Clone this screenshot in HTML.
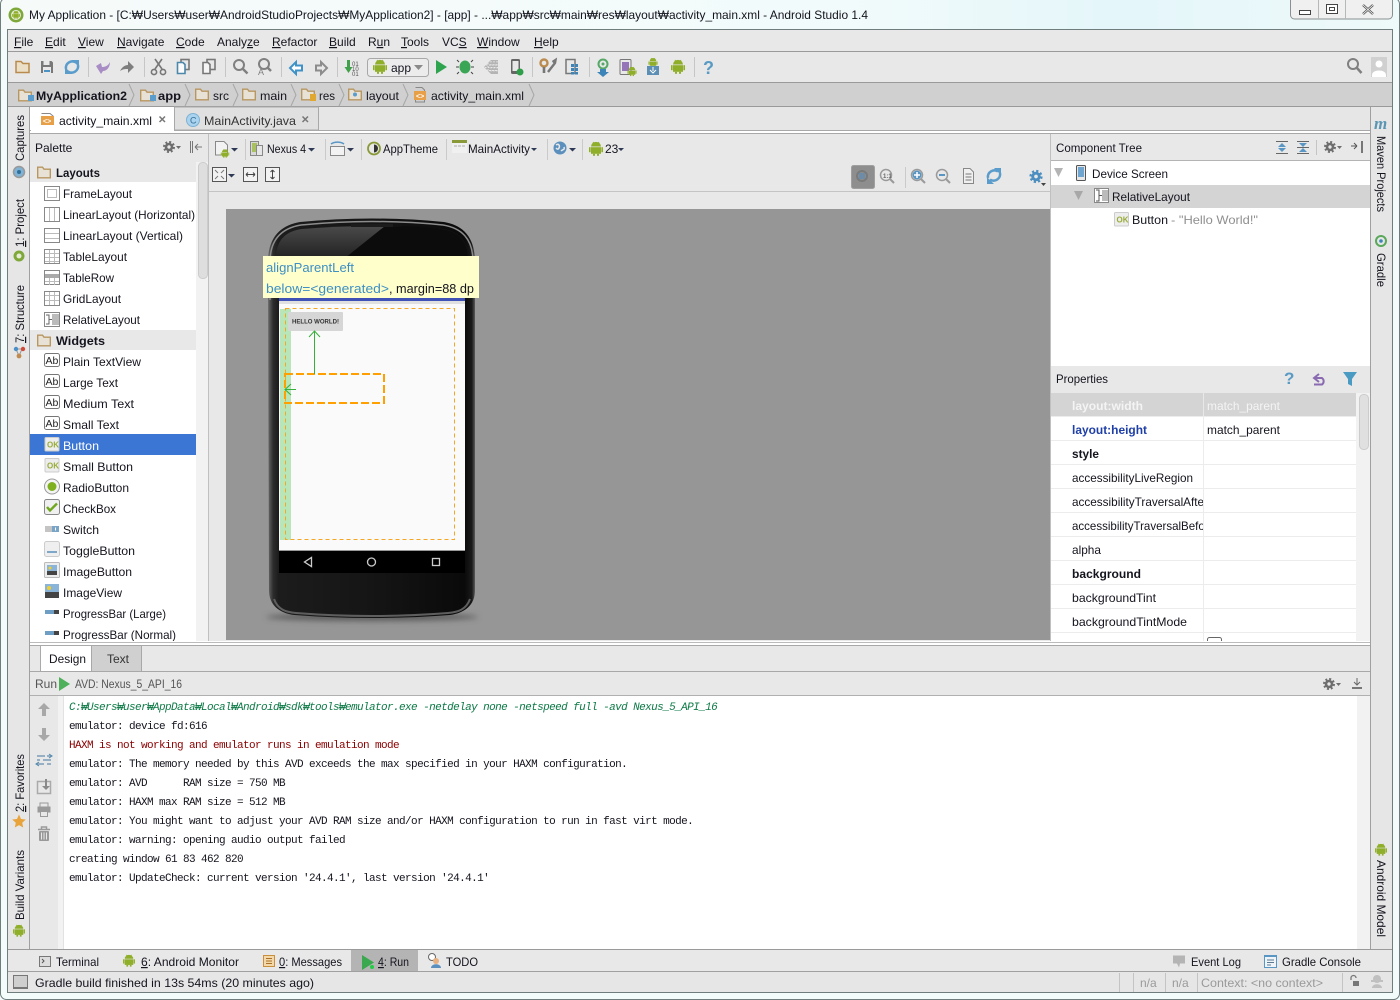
<!DOCTYPE html>
<html><head><meta charset="utf-8"><style>
html,body{margin:0;padding:0;width:1400px;height:1000px;overflow:hidden;background:#f4fbfb}
svg{display:block;position:absolute;left:0;top:0}
text{font-family:"Liberation Sans","Noto Sans CJK KR",sans-serif;font-size:12px;fill:#14141e;white-space:pre}
.b{font-weight:bold}
.g{fill:#8f8f8f}
.m text,text.m{font-family:"Liberation Mono","Noto Sans CJK KR",monospace;font-size:11px;letter-spacing:-.6px}
.u{text-decoration:underline}
</style></head><body>
<svg width="1400" height="1000" viewBox="0 0 1400 1000" xmlns="http://www.w3.org/2000/svg">
<defs>
<linearGradient id="tb" x1="0" y1="0" x2="1" y2="0"><stop offset="0" stop-color="#f6fbfa"/><stop offset=".6" stop-color="#f2fbfb"/><stop offset=".8" stop-color="#e4f6fa"/><stop offset="1" stop-color="#eef9f9"/></linearGradient>
<linearGradient id="ph" x1="0" y1="0" x2="1" y2="0"><stop offset="0" stop-color="#6a6a6a"/><stop offset=".025" stop-color="#2c2c2c"/><stop offset=".05" stop-color="#1c1c1c"/><stop offset=".5" stop-color="#151515"/><stop offset=".95" stop-color="#0a0a0a"/><stop offset=".985" stop-color="#1a1a1a"/><stop offset="1" stop-color="#5a5a5a"/></linearGradient>
<linearGradient id="phtop" x1="0" y1="0" x2="0" y2="1"><stop offset="0" stop-color="#4a4a4a"/><stop offset="1" stop-color="#222"/></linearGradient>
<filter id="bl" x="-20%" y="-200%" width="140%" height="500%"><feGaussianBlur stdDeviation="3"/></filter>
<g id="droid"><path d="M-5-1.5a5 4.6 0 0 1 10 0z" fill="#8fae2a"/><path d="M-3-6l1 1.5M3-6l-1 1.5" stroke="#8fae2a" fill="none"/><rect x="-5" y="-.8" width="10" height="6.6" fill="#8fae2a"/><rect x="-7" y="-.8" width="1.6" height="5" fill="#8fae2a"/><rect x="5.4" y="-.8" width="1.6" height="5" fill="#8fae2a"/><rect x="-3" y="5.8" width="2" height="2" fill="#8fae2a"/><rect x="1" y="5.8" width="2" height="2" fill="#8fae2a"/></g>
<path id="fold" d="M.7 1.2H5.500L7 3.200H13.300V11.800H.7z" fill="#e8e2d6" stroke="#b8965f" stroke-width="1.400"/>
<g id="gear"><circle r="3" fill="none" stroke="#6e6e6e" stroke-width="2.600"/><circle r="5" fill="none" stroke="#6e6e6e" stroke-width="2" stroke-dasharray="2 1.930"/></g>
<g id="ab"><rect x=".5" y=".5" width="15" height="13" rx="2" fill="#fff" stroke="#777"/><text x="1.500" y="11" style="font-size:10.500px;fill:#222">Ab</text></g>
<g id="ok"><rect x=".5" y=".5" width="14" height="13.500" rx="1" fill="#ededed" stroke="#ccc"/><text x="2.500" y="10.500" style="font-size:8px;font-weight:bold;fill:#9aac3a">OK</text></g>
<clipPath id="c1"><rect x="30" y="162" width="166" height="479"/></clipPath>
<clipPath id="c2"><rect x="1052" y="393" width="151" height="248"/></clipPath>
<clipPath id="c3"><rect x="1051" y="393" width="305" height="248"/></clipPath>
</defs>

<!-- window frame -->
<rect width="1400" height="1000" fill="#f4fbfb"/>
<rect width="1400" height="30" fill="url(#tb)"/>
<rect x="7.500" y="29.500" width="1385" height="963" fill="#e6e6e6" stroke="#6f7d7d"/>
<rect x="0.500" y="-2" width="1399" height="1001.500" rx="6" fill="none" stroke="#6f7d7d"/>
<path d="M1290.500 0V15a4 4 0 0 0 4 4h94a4 4 0 0 0 4-4V0" fill="#f0f0f0" stroke="#8a8f8f"/>
<path d="M1318.500 0V19M1345.500 0V19" stroke="#b5b8b8"/>
<rect x="1299.500" y="10.500" width="11" height="4" fill="#fff" stroke="#444"/>
<rect x="1326.500" y="4.500" width="11" height="9" fill="#fff" stroke="#444"/><rect x="1329.500" y="7.500" width="5" height="3" fill="#fff" stroke="#444"/>
<path d="M1363 5l10 9M1373 5l-10 9" stroke="#555" stroke-width="2.400"/><path d="M1363 5l10 9M1373 5l-10 9" stroke="#fff" stroke-width=".8"/>
<circle cx="16" cy="15" r="7.500" fill="#7fa83a"/><circle cx="16" cy="15" r="5" fill="#e6ecd8"/><use href="#droid" transform="translate(16,14.500) scale(.55)"/>
<text x="29" y="19" textLength="839" lengthAdjust="spacingAndGlyphs">My Application - [C:₩Users₩user₩AndroidStudioProjects₩MyApplication2] - [app] - ...₩app₩src₩main₩res₩layout₩activity_main.xml - Android Studio 1.4</text>

<!-- menu -->
<rect x="8" y="30" width="1384" height="21" fill="#e8e8e8"/>
<rect x="8" y="51" width="1384" height="1" fill="#9a9a9a"/>
<text y="46"><tspan x="14" class="u">F</tspan><tspan>ile</tspan><tspan x="45" class="u">E</tspan><tspan>dit</tspan><tspan x="78" class="u">V</tspan><tspan>iew</tspan><tspan x="117" class="u">N</tspan><tspan>avigate</tspan><tspan x="176" class="u">C</tspan><tspan>ode</tspan><tspan x="217">Analy</tspan><tspan class="u">z</tspan><tspan>e</tspan><tspan x="272" class="u">R</tspan><tspan>efactor</tspan><tspan x="329" class="u">B</tspan><tspan>uild</tspan><tspan x="368">R</tspan><tspan class="u">u</tspan><tspan>n</tspan><tspan x="401" class="u">T</tspan><tspan>ools</tspan><tspan x="442">VC</tspan><tspan class="u">S</tspan><tspan x="477" class="u">W</tspan><tspan>indow</tspan><tspan x="534" class="u">H</tspan><tspan>elp</tspan></text>

<!-- toolbar -->
<rect x="8" y="52" width="1384" height="30" fill="#e8e8e8"/>
<rect x="8" y="82" width="1384" height="1" fill="#9a9a9a"/>
<g stroke="#c6c6c6"><path d="M88.500 57V77M144.500 57V77M225.500 57V77M281.500 57V77M337.500 57V77M532.500 57V77M589.500 57V77M694.500 57V77"/></g>
<path d="M16 61.500H21L23 63.500H29V72.500H16z" fill="#ecdfc8" stroke="#b88a4c" stroke-width="1.500"/>
<path d="M41 61H51.500L53 62.500V73H41z" fill="#787878"/><rect x="43.500" y="61" width="6" height="4" fill="#e8e8e8"/><rect x="43" y="67" width="8" height="6" fill="#e8e8e8"/><rect x="44" y="70" width="6" height="2" fill="#4c93c4"/>
<path d="M66 69a6.500 6.500 0 0 1 10-6.500M78 65a6.500 6.500 0 0 1-10 6.500" fill="none" stroke="#5a9ccb" stroke-width="2.500"/><path d="M72 60h7v7zM72 74h-7v-7z" fill="#5a9ccb"/>
<path d="M96 66l5 8 2-3c4 0 7-4 7-9-2 4-5 5-8 5l-1-4z" fill="#a88cc4"/>
<path d="M120 71c2-4 5-6 8-6v-4l6 6-6 6v-4c-3 0-5 0-8 2z" fill="#7e7e7e"/>
<g fill="none" stroke="#777" stroke-width="1.600"><path d="M155 59l7 10M162 59l-7 10"/><circle cx="154" cy="72" r="2.600"/><circle cx="163" cy="72" r="2.600"/></g>
<g fill="#e8e8e8" stroke-width="1.600"><rect x="181" y="59.500" width="8" height="10" stroke="#777"/><path d="M177.500 62.500H183L185 64.500V73.500H177.500z" fill="#fafafa" stroke="#4c87ac"/></g>
<g fill="#e8e8e8" stroke-width="1.600"><rect x="207" y="59.500" width="8" height="10" stroke="#777"/><path d="M203 62.500H208L210 64.500V73.500H203z" fill="#f5f5f5" stroke="#777"/></g>
<g fill="none" stroke="#808080"><circle cx="239" cy="65" r="5" stroke-width="2"/><path d="M243 69l4.500 4.500" stroke-width="2.500"/><circle cx="264" cy="64" r="5" stroke-width="2"/><path d="M268 68l3 3" stroke-width="2.500"/></g>
<text x="258" y="75" style="font-size:9px;fill:#808080">A</text>
<path d="M290 68l6-6v3.500h6v5h-6v3.500z" fill="#fff" stroke="#3f92c8" stroke-width="2"/>
<path d="M327 68l-6-6v3.500h-5v5h5v3.500z" fill="#e8e8e8" stroke="#8c8c8c" stroke-width="2"/>
<path d="M347 60h3v7h2.500l-4 6-4-6H347z" fill="#41a04a"/>
<text x="352" y="66" style="font-size:6px;fill:#555">01</text><text x="352" y="71" style="font-size:6px;fill:#555">10</text><text x="352" y="76" style="font-size:6px;fill:#555">01</text>
<rect x="367.500" y="58.500" width="61" height="18" rx="3" fill="#ececec" stroke="#a8a8a8"/>
<use href="#droid" transform="translate(380,66)"/>
<text x="391" y="72">app</text>
<path d="M414 65h9l-4.500 5z" fill="#8a8a8a"/>
<path d="M436 60l11 7-11 7z" fill="#2fa44f"/>
<ellipse cx="465" cy="67" rx="5.500" ry="6.500" fill="#3aa655"/><path d="M459 62l-2-2M459 67h-3M459 72l-2 2M471 62l2-2M471 67h3M471 72l2 2" stroke="#444"/>
<path d="M484 67l7-7h7v14h-7z" fill="#b4b4b4"/><path d="M488 63v8M491 61v12M494 61v12M497 61v12M486 65h12M485 67.500h13M486 70.500h12" stroke="#e8e8e8" stroke-dasharray="1.500 1.500"/>
<rect x="511" y="59" width="9" height="15" rx="1.500" fill="#666"/><rect x="512.500" y="61" width="6" height="10" fill="#e8e8e8"/>
<circle cx="520" cy="72" r="3.500" fill="#2f9e4a"/>
<circle cx="544" cy="63" r="3.500" fill="none" stroke="#bb8a4e" stroke-width="2.400"/><path d="M548 72l7-9 .5-3-3 2" fill="none" stroke="#777" stroke-width="2.400"/><path d="M544 67v6" stroke="#777" stroke-width="2.600"/>
<rect x="566" y="59.500" width="9" height="14" fill="#e8e8e8" stroke="#777" stroke-width="1.500"/><g fill="#3d85b8"><rect x="571" y="64" width="3" height="3"/><rect x="575" y="64" width="3" height="3"/><rect x="571" y="68" width="3" height="3"/><rect x="575" y="68" width="3" height="3"/><rect x="571" y="72" width="3" height="2.500"/><rect x="575" y="72" width="3" height="2.500"/></g>
<circle cx="603" cy="64" r="4.500" fill="none" stroke="#55a868" stroke-width="2"/><circle cx="603" cy="64" r="1.500" fill="#55a868"/><path d="M600 69h6v3h3l-6 5-6-5h3z" fill="#3d85b8"/>
<rect x="620" y="59.500" width="11" height="15" rx="1" fill="#e8e8e8" stroke="#777"/><rect x="622" y="62" width="7" height="9" fill="#9575b8"/><use href="#droid" transform="translate(632,71) scale(.65)"/>
<use href="#droid" transform="translate(653,62) scale(.65)"/><rect x="647" y="66" width="12" height="9" fill="#5d8fb4"/><path d="M653 67v4M650 70l3 3 3-3" stroke="#fff" fill="none"/>
<use href="#droid" transform="translate(678,66)"/>
<text x="703" y="74" style="font-size:18px;font-weight:bold;fill:#5a9bc4">?</text>
<g fill="none" stroke="#808080"><circle cx="1353" cy="64" r="5" stroke-width="2"/><path d="M1357 68l4.500 5" stroke-width="2.500"/></g>
<rect x="1371" y="57" width="16" height="20" fill="#d0d0d0"/><circle cx="1379" cy="64" r="3.500" fill="#fff"/><path d="M1372 75c0-6 14-6 14 0v2h-14z" fill="#fff"/>

<!-- nav bar -->
<rect x="8" y="83" width="1384" height="23" fill="#d0d0d0"/>
<rect x="8" y="106" width="1384" height="1" fill="#9a9a9a"/>
<g fill="none" stroke="#a6a6a6"><path d="M129 84l5 11-5 11M185 84l5 11-5 11M233 84l5 11-5 11M291 84l5 11-5 11M339 84l5 11-5 11M403 84l5 11-5 11M529 84l5 11-5 11"/></g>
<g fill="#d0d0d0"><use href="#fold" x="18" y="89"/><use href="#fold" x="140" y="89"/><use href="#fold" x="195" y="88"/><use href="#fold" x="242" y="88"/><use href="#fold" x="301" y="88"/><use href="#fold" x="348" y="88"/></g>
<rect x="28" y="95" width="6" height="6" fill="#5a9ccb"/><rect x="150" y="95" width="6" height="6" fill="#5a9ccb"/>
<rect x="310" y="94" width="6" height="7" fill="#e0a830"/><circle cx="355" cy="94.500" r="2" fill="#5a9ccb"/>
<path d="M415.500 87.500H422L424.500 90V94" fill="none" stroke="#888"/><rect x="414" y="91" width="12" height="9" fill="#e8a048"/><text x="416" y="98.500" style="font-size:7px;fill:#fff;font-weight:bold">&lt;&gt;</text><path d="M415.500 100v2H424.500v-2" fill="none" stroke="#888"/>
<text x="36" y="100" class="b" textLength="91" lengthAdjust="spacingAndGlyphs">MyApplication2</text>
<text x="158" y="100" class="b" textLength="23" lengthAdjust="spacingAndGlyphs">app</text><text x="213" y="100">src</text><text x="260" y="100" textLength="27" lengthAdjust="spacingAndGlyphs">main</text><text x="319" y="100" textLength="16" lengthAdjust="spacingAndGlyphs">res</text><text x="366" y="100" textLength="33" lengthAdjust="spacingAndGlyphs">layout</text><text x="431" y="100" textLength="93" lengthAdjust="spacingAndGlyphs">activity_main.xml</text>

<!-- editor tabs -->
<rect x="30" y="107" width="1340" height="23" fill="#e6e6e6"/>
<rect x="30" y="107" width="144" height="24" fill="#fff"/>
<rect x="174.500" y="107" width="144" height="23" fill="#e0e0e0" stroke="#a8a8a8"/>
<path d="M41.500 113.500H50L53 116V120" fill="none" stroke="#888"/><rect x="41" y="116" width="13" height="9" fill="#e8a048"/><text x="43" y="123.500" style="font-size:7px;fill:#fff;font-weight:bold">&lt;&gt;</text>
<text x="59" y="125" textLength="93" lengthAdjust="spacingAndGlyphs">activity_main.xml</text>
<path d="M159.500 116.500l5.500 5.500M165 116.500l-5.500 5.500" stroke="#777" stroke-width="1.500"/>
<circle cx="193" cy="120" r="6.500" fill="#a9d3ee" stroke="#7fb2d4"/><text x="190" y="123.500" style="font-size:9px;fill:#3a6f96">C</text>
<text x="204" y="125" textLength="92" lengthAdjust="spacingAndGlyphs" style="fill:#333">MainActivity.java</text>
<path d="M302.500 116.500l5.500 5.500M308 116.500l-5.500 5.500" stroke="#777" stroke-width="1.500"/>
<rect x="30" y="130" width="1340" height="4" fill="#fff"/>
<rect x="30" y="133" width="1340" height="1" fill="#a8a8a8"/>
<rect x="30" y="130" width="1340" height="1" fill="#a8a8a8"/><rect x="31" y="130" width="143" height="1" fill="#fff"/>

<!-- side strips -->
<rect x="8" y="107" width="22" height="842" fill="#e6e6e6"/>
<rect x="29" y="107" width="1" height="842" fill="#a0a0a0"/>
<rect x="1370" y="107" width="22" height="842" fill="#e6e6e6"/>
<rect x="1370" y="107" width="1" height="842" fill="#a0a0a0"/>
<text transform="translate(24,161) rotate(-90)" textLength="46" lengthAdjust="spacingAndGlyphs">Captures</text>
<circle cx="19" cy="172" r="5.500" fill="#7fb2d4" stroke="#999" stroke-width="1.500"/><circle cx="19" cy="172" r="2" fill="#2f6f9a"/>
<text transform="translate(24,247) rotate(-90)" textLength="48" lengthAdjust="spacingAndGlyphs"><tspan class="u">1</tspan>: Project</text>
<circle cx="19" cy="256" r="5.500" fill="#7fa83a"/><circle cx="19" cy="256" r="2.500" fill="#e6ecd8"/>
<text transform="translate(24,343) rotate(-90)" textLength="58" lengthAdjust="spacingAndGlyphs"><tspan class="u">7</tspan>: Structure</text>
<path d="M16 349l3 7 3-7M16 349h6" fill="none" stroke="#999"/><circle cx="16" cy="349" r="2.200" fill="#4a8fc8"/><circle cx="23" cy="349" r="2.200" fill="#d04a3a"/><circle cx="19" cy="356" r="2.400" fill="#c08a50"/>
<text transform="translate(24,812) rotate(-90)" textLength="58" lengthAdjust="spacingAndGlyphs"><tspan class="u">2</tspan>: Favorites</text>
<path d="M19 814.500l2 4.500 4.800.5-3.600 3.200 1 4.800-4.200-2.400-4.200 2.400 1-4.800-3.600-3.200 4.800-.5z" fill="#e8a33a"/>
<text transform="translate(24,920) rotate(-90)" textLength="70" lengthAdjust="spacingAndGlyphs">Build Variants</text>
<use href="#droid" transform="translate(19,930) rotate(0) scale(.85)"/>
<text x="1374" y="129" style="font-size:17px;font-weight:bold;font-style:italic;fill:#5a96b4;font-family:'Liberation Serif',serif">m</text>
<text transform="translate(1377,136) rotate(90)" textLength="76" lengthAdjust="spacingAndGlyphs">Maven Projects</text>
<circle cx="1381" cy="241" r="5" fill="none" stroke="#5aa85a" stroke-width="2"/><circle cx="1381" cy="241" r="1.800" fill="#3d85b8"/>
<text transform="translate(1377,253) rotate(90)" textLength="34" lengthAdjust="spacingAndGlyphs">Gradle</text>
<use href="#droid" transform="translate(1381,849) scale(.85)"/>
<text transform="translate(1377,860) rotate(90)" textLength="77" lengthAdjust="spacingAndGlyphs">Android Model</text>

<!-- palette -->
<rect x="30" y="134" width="178" height="28" fill="#e8e8e8"/>
<text x="35" y="152">Palette</text>
<use href="#gear" transform="translate(169,147)"/><path d="M176 146h5l-2.500 3z" fill="#6e6e6e"/>
<path d="M190.500 141v12M192.500 141v12" stroke="#777"/><path d="M195 147h7M195 147l3-3M195 147l3 3" stroke="#777" fill="none"/>
<rect x="30" y="162" width="178" height="479" fill="#fff"/>
<rect x="30" y="162" width="166" height="20" fill="#e8e8e8"/>
<rect x="30" y="330" width="166" height="20" fill="#e8e8e8"/>
<rect x="30" y="434" width="166" height="21" fill="#3c76d4"/>
<rect x="196" y="162" width="12" height="479" fill="#f2f2f2"/>
<rect x="198.500" y="162.500" width="9" height="116" rx="4" fill="#dedede" stroke="#ccc"/>
<rect x="208" y="134" width="1" height="508" fill="#c0c0c0"/>
<g fill="#f0e8da"><use href="#fold" x="37" y="166"/><use href="#fold" x="37" y="334"/></g>
<g clip-path="url(#c1)">
<text x="56" y="177" class="b" textLength="44" lengthAdjust="spacingAndGlyphs">Layouts</text><text x="56" y="345" class="b" textLength="49" lengthAdjust="spacingAndGlyphs">Widgets</text>
<text x="63" y="198" textLength="69" lengthAdjust="spacingAndGlyphs">FrameLayout</text>
<text x="63" y="219" textLength="132" lengthAdjust="spacingAndGlyphs">LinearLayout (Horizontal)</text>
<text x="63" y="240" textLength="120" lengthAdjust="spacingAndGlyphs">LinearLayout (Vertical)</text>
<text x="63" y="261" textLength="64" lengthAdjust="spacingAndGlyphs">TableLayout</text>
<text x="63" y="282" textLength="51" lengthAdjust="spacingAndGlyphs">TableRow</text>
<text x="63" y="303" textLength="58" lengthAdjust="spacingAndGlyphs">GridLayout</text>
<text x="63" y="324" textLength="77" lengthAdjust="spacingAndGlyphs">RelativeLayout</text>
<text x="63" y="366" textLength="78" lengthAdjust="spacingAndGlyphs">Plain TextView</text>
<text x="63" y="387" textLength="55" lengthAdjust="spacingAndGlyphs">Large Text</text>
<text x="63" y="408" textLength="71" lengthAdjust="spacingAndGlyphs">Medium Text</text>
<text x="63" y="429" textLength="56" lengthAdjust="spacingAndGlyphs">Small Text</text>
<text x="63" y="450" style="fill:#fff" textLength="36" lengthAdjust="spacingAndGlyphs">Button</text>
<text x="63" y="471" textLength="70" lengthAdjust="spacingAndGlyphs">Small Button</text>
<text x="63" y="492" textLength="66" lengthAdjust="spacingAndGlyphs">RadioButton</text>
<text x="63" y="513" textLength="53" lengthAdjust="spacingAndGlyphs">CheckBox</text>
<text x="63" y="534" textLength="36" lengthAdjust="spacingAndGlyphs">Switch</text>
<text x="63" y="555" textLength="72" lengthAdjust="spacingAndGlyphs">ToggleButton</text>
<text x="63" y="576" textLength="69" lengthAdjust="spacingAndGlyphs">ImageButton</text>
<text x="63" y="597" textLength="59" lengthAdjust="spacingAndGlyphs">ImageView</text>
<text x="63" y="618" textLength="103" lengthAdjust="spacingAndGlyphs">ProgressBar (Large)</text>
<text x="63" y="639" textLength="113" lengthAdjust="spacingAndGlyphs">ProgressBar (Normal)</text>
</g>
<g fill="#fff" stroke="#888"><rect x="44.500" y="186.500" width="15" height="14"/><rect x="44.500" y="207.500" width="15" height="14"/><rect x="44.500" y="228.500" width="15" height="14"/><rect x="44.500" y="249.500" width="15" height="14"/><rect x="44.500" y="270.500" width="15" height="14"/><rect x="44.500" y="291.500" width="15" height="14"/><rect x="44.500" y="312.500" width="15" height="14"/></g>
<rect x="47.500" y="189.500" width="9" height="8" fill="none" stroke="#bbb"/>
<path d="M49.500 208v13M54.500 208v13M45 233.500h14M45 238.500h14M45 253.500h14M45 257.500h14M45 261.500h14M49.500 250v13M54.500 250v13M45 295.500h14M45 300.500h14M49.500 292v13M54.500 292v13" stroke="#bbb" fill="none"/>
<rect x="45" y="274" width="14" height="4" fill="#aaa"/><path d="M45 281.500h14M49.500 278v7M54.500 278v7" stroke="#bbb"/>
<rect x="52" y="314" width="7" height="11" fill="#bbb"/><path d="M46 315h3v9h-3M49 319.500h3" stroke="#666" fill="none"/>
<use href="#ab" x="44" y="353"/><use href="#ab" x="44" y="374"/><use href="#ab" x="44" y="395"/><use href="#ab" x="44" y="416"/>
<use href="#ok" x="44.500" y="437"/><use href="#ok" x="44.500" y="458"/>
<circle cx="52" cy="486.500" r="7.500" fill="#f4f4f4" stroke="#999"/><circle cx="52" cy="486.500" r="4.500" fill="#7fb01f"/>
<rect x="44.500" y="499.500" width="15" height="15" rx="2" fill="#f0f0f0" stroke="#888"/><path d="M47 507l3 3.500 7-7" fill="none" stroke="#6fa81f" stroke-width="2.400"/>
<rect x="45" y="526" width="7" height="6" fill="#c4c4c4"/><rect x="52" y="526" width="7" height="6" fill="#78a4c8"/><rect x="55" y="527.500" width="1" height="3" fill="#fff"/>
<rect x="44.500" y="541.500" width="15" height="15" rx="2" fill="#efefef" stroke="#ccc"/><rect x="47" y="551" width="10" height="2" fill="#7fa8c8"/>
<rect x="44.500" y="562.500" width="15" height="15" rx="1" fill="#ededed" stroke="#bbb"/><rect x="47" y="565" width="10" height="10" fill="#8ab4d8"/><rect x="47" y="571" width="10" height="4" fill="#444"/><circle cx="50" cy="568" r="1.500" fill="#f0d030"/>
<rect x="45" y="584" width="14" height="14" fill="#8ab4d8"/><rect x="45" y="592" width="14" height="6" fill="#444"/><circle cx="49" cy="588" r="2" fill="#f0d030"/>
<rect x="45" y="610" width="9" height="4" fill="#6f9ec4"/><rect x="54" y="610" width="5" height="4" fill="#444"/><rect x="45" y="631" width="9" height="4" fill="#6f9ec4"/><rect x="54" y="631" width="5" height="4" fill="#444"/>

<!-- design area -->
<rect x="209" y="134" width="842" height="507" fill="#e8e8e8"/>
<rect x="209" y="191" width="842" height="1" fill="#c4c4c4"/>
<rect x="226" y="209" width="825" height="431" fill="#969696"/>
<g stroke="#cacaca"><path d="M245.500 139V160M325.500 139V160M361.500 139V160M446.500 139V160M547.500 139V160M582.500 139V160M905.500 167V188"/></g>
<path d="M215.500 141.500H224L227.500 145V155H215.500z" fill="#f2f2f2" stroke="#888"/><use href="#droid" transform="translate(225,153) scale(.6)"/>
<g fill="#2e3a55"><path d="M231 148h7l-3.500 3.500zM308 148h7l-3.500 3.500zM347 148h7l-3.500 3.500zM531 148h6l-3 3zM569 148h7l-3.500 3.500zM618 148h6l-3 3zM228 174h7l-3.500 3.500z"/></g>
<rect x="250.500" y="141.500" width="8" height="14" fill="#d8d8d8" stroke="#888"/><rect x="252" y="143" width="5" height="9" fill="#a8c060"/><rect x="256.500" y="145.500" width="6" height="10" fill="#e6e6e6" stroke="#888"/>
<text x="267" y="153" textLength="39" lengthAdjust="spacingAndGlyphs">Nexus 4</text>
<path d="M331 144a9 6 0 0 1 13 0" fill="none" stroke="#5a96c4" stroke-width="1.500"/><rect x="330.500" y="146.500" width="14" height="9" fill="#f2f2f2" stroke="#888"/>
<circle cx="374" cy="148.500" r="6" fill="#e8e8e8" stroke="#8a9a38" stroke-width="1.800"/><path d="M374 144.500a4 4 0 0 1 0 8z" fill="#333"/>
<text x="383" y="153" textLength="55" lengthAdjust="spacingAndGlyphs">AppTheme</text>
<rect x="452" y="140" width="15" height="13" fill="#f0f0f0"/><rect x="452" y="140" width="15" height="3" fill="#8a9a38"/><path d="M454 146h11" stroke="#aaa" stroke-dasharray="3 1"/>
<text x="468" y="153" textLength="62" lengthAdjust="spacingAndGlyphs">MainActivity</text>
<circle cx="560" cy="148" r="6.500" fill="#5a8fbe"/><path d="M556 145c3-2 4 1 3 3s-2 1-3 0M561 151c2-2 4-1 3-4" stroke="#e8e8e8" fill="none" stroke-width="1.500"/>
<use href="#droid" transform="translate(596,148)"/><text x="605" y="153">23</text>
<rect x="212.500" y="167.500" width="14" height="14" fill="#f2f2f2" stroke="#555"/><path d="M215 170l3 3M224 170l-3 3M215 179l3-3M224 179l-3-3" stroke="#777"/>
<rect x="243.500" y="167.500" width="14" height="14" fill="#f2f2f2" stroke="#555"/><path d="M246 174.500h9M246 174.500l2-2M246 174.500l2 2M255 174.500l-2-2M255 174.500l-2 2" stroke="#444" fill="none"/>
<rect x="265.500" y="167.500" width="14" height="14" fill="#f2f2f2" stroke="#555"/><path d="M272.500 170v9M272.500 170l-2 2M272.500 170l2 2M272.500 179l-2-2M272.500 179l2-2" stroke="#444" fill="none"/>
<rect x="851.500" y="165.500" width="23" height="23" rx="2" fill="#8e8e8e" stroke="#a0a0a0"/><circle cx="862" cy="176" r="5" fill="none" stroke="#7a7a7a" stroke-width="2"/><rect x="859" y="173" width="6" height="6" fill="#6c8ca8"/>
<g fill="none" stroke="#9a9a9a"><circle cx="886" cy="175" r="5.500" stroke-width="1.500"/><path d="M890 179l4 4" stroke-width="2"/></g><text x="883" y="178" style="font-size:6px;font-weight:bold;fill:#666">1:1</text>
<g fill="none" stroke="#9a9a9a"><circle cx="917" cy="175" r="5.500" stroke-width="1.500"/><path d="M921 179l4 4" stroke-width="2"/><circle cx="942" cy="175" r="5.500" stroke-width="1.500"/><path d="M946 179l4 4" stroke-width="2"/></g>
<circle cx="917" cy="175" r="4.500" fill="#5a96c4"/><path d="M914 175h6M917 172v6" stroke="#fff" stroke-width="1.500"/>
<path d="M939 175h6" stroke="#5a96c4" stroke-width="2"/>
<path d="M963.500 168.500H970L973.500 172V183.500H963.500z" fill="#f0f0f0" stroke="#888"/><path d="M965.500 174h6M965.500 177h6M965.500 180h6" stroke="#777"/>
<path d="M988 178a6.500 6.500 0 0 1 10-6.500M1000 173a6.500 6.500 0 0 1-10 6.500" fill="none" stroke="#5a9ccb" stroke-width="2.500"/><path d="M994 168h7v7zM994 184h-7v-7z" fill="#5a9ccb"/>
<g transform="translate(1036,176.500) scale(1.100)"><circle r="3" fill="none" stroke="#4b8ebf" stroke-width="2.600"/><circle r="5" fill="none" stroke="#4b8ebf" stroke-width="2" stroke-dasharray="2 1.930"/></g><path d="M1041 183h5l-2.500 3z" fill="#444"/>

<!-- phone -->
<ellipse cx="372" cy="617" rx="106" ry="4" fill="#5c5c5c" filter="url(#bl)"/>
<path d="M268 262C268 236 282 225 300 222Q372 215 444 222C462 225 475 236 475 262V590C475 606 464 613 450 615Q372 621 294 615C280 613 269 606 269 590z" fill="url(#ph)"/>
<path d="M270 300V262C270 238 283 228 301 225Q372 218 443 225C461 228 473 238 473 262" fill="none" stroke="#8c8c8c" stroke-width="1.500"/>
<path d="M276 258C276 240 286 231 302 229Q372 223 442 229C458 231 468 240 468 258z" fill="url(#phtop)"/>
<path d="M385 226Q420 226 442 229C458 231 468 240 468 258H345z" fill="#0c0c0c"/>
<path d="M274 599C278 610 286 612 296 613Q372 619 448 613C458 612 466 610 470 599" fill="none" stroke="#5e5e5e" stroke-width="2"/>
<rect x="351" y="224" width="42" height="3" fill="#1c1c1c"/>
<rect x="279" y="298" width="186" height="253" fill="#fafafa"/>
<rect x="279" y="298" width="186" height="3" fill="#3f51b5"/>
<rect x="279" y="301" width="186" height="3" fill="#e0e0e0"/>
<rect x="279" y="550" width="186" height="1" fill="#999"/>
<rect x="279" y="551" width="186" height="22" fill="#000"/>
<path d="M311.500 557.500v9l-7-4.500z" fill="none" stroke="#ccc" stroke-width="1.300"/><circle cx="371.500" cy="562" r="4" fill="none" stroke="#ccc" stroke-width="1.300"/><rect x="432.500" y="558.500" width="7" height="7" fill="none" stroke="#ccc" stroke-width="1.300"/>
<rect x="280" y="309" width="11" height="231" fill="#b9e6b9"/>
<rect x="288" y="312" width="55" height="19" rx="1" fill="#d6d6d6"/>
<text x="292" y="323.500" style="font-size:6.400px;font-weight:bold;fill:#333" textLength="47" lengthAdjust="spacingAndGlyphs">HELLO WORLD!</text>
<rect x="285.500" y="308.500" width="169" height="231" fill="none" stroke="#f5a623" stroke-dasharray="4 3"/>
<rect x="285" y="374" width="99" height="29" fill="none" stroke="#ffa000" stroke-width="2" stroke-dasharray="8 3"/>
<path d="M314.500 374V331M309 337l5.500-6 5.500 6M296 389.500H285M291 384l-6 5.500 6 5.500" fill="none" stroke="#35b03a"/>
<rect x="263" y="256" width="216" height="42" fill="#ffffcc"/>
<text x="266" y="272" style="font-size:13px;fill:#3d8fc4" textLength="88" lengthAdjust="spacingAndGlyphs">alignParentLeft</text>
<text x="266" y="293" style="font-size:13px;fill:#3d8fc4" textLength="123" lengthAdjust="spacingAndGlyphs">below=&lt;generated&gt;</text>
<text x="389" y="293" style="font-size:13px" textLength="85" lengthAdjust="spacingAndGlyphs">, margin=88 dp</text>

<!-- component tree -->
<rect x="1050" y="134" width="1" height="508" fill="#c0c0c0"/>
<rect x="1051" y="134" width="319" height="26" fill="#e8e8e8"/>
<rect x="1051" y="160" width="319" height="1" fill="#b4b4b4"/>
<rect x="1051" y="161" width="319" height="205" fill="#fff"/>
<rect x="1051" y="185" width="319" height="23" fill="#d4d4d4"/>
<text x="1056" y="152" textLength="86" lengthAdjust="spacingAndGlyphs">Component Tree</text>
<path d="M1276 141.500h12M1276 153.500h12" stroke="#666"/><path d="M1282 143l-4 4h8zM1282 152l-4-4h8z" fill="#5a96c4"/>
<path d="M1297 141.500h12M1297 147.500h12M1297 153.500h12" stroke="#666"/><path d="M1303 147l-4-4h8zM1303 148l-4 4h8z" fill="#5a96c4"/>
<path d="M1316.500 140V155" stroke="#c4c4c4"/>
<use href="#gear" transform="translate(1330,147)"/><path d="M1337 146h5l-2.500 3z" fill="#6e6e6e"/>
<path d="M1351 146h6M1357 146l-3-3M1357 146l-3 3" stroke="#555" fill="none"/><rect x="1361" y="141" width="2" height="12" fill="#777"/>
<path d="M1054 168h9l-4.500 9z" fill="#b4b4b4"/><path d="M1074 191h9l-4.500 9z" fill="#a8a8a8"/>
<rect x="1076.500" y="165.500" width="9" height="15" rx="1" fill="#e8e8e8" stroke="#555"/><rect x="1078" y="167" width="6" height="10" fill="#6fa5cf"/>
<text x="1092" y="178" textLength="76" lengthAdjust="spacingAndGlyphs">Device Screen</text>
<rect x="1094.500" y="188.500" width="14" height="14" fill="#fff" stroke="#888"/><rect x="1102" y="190" width="6" height="11" fill="#bbb"/><path d="M1096 190h3v11h-3M1099 195.500h3" stroke="#555" fill="none"/>
<text x="1112" y="201" textLength="78" lengthAdjust="spacingAndGlyphs">RelativeLayout</text>
<use href="#ok" x="1114" y="212"/>
<text x="1132" y="224" textLength="36" lengthAdjust="spacingAndGlyphs">Button</text>
<text x="1171" y="224" class="g" textLength="87" lengthAdjust="spacingAndGlyphs">- "Hello World!"</text>

<!-- properties -->
<rect x="1051" y="366" width="319" height="27" fill="#e8e8e8"/>
<text x="1056" y="383" textLength="52" lengthAdjust="spacingAndGlyphs">Properties</text>
<text x="1284" y="384" style="font-size:17px;font-weight:bold;fill:#5a9bc4">?</text>
<path d="M1319 374l-5 4 5 4M1314 378h8a4 4 0 0 1 0 6.500h-8" fill="none" stroke="#8a6ab0" stroke-width="2"/>
<path d="M1343 372h14l-5 7v7l-4-2v-5z" fill="#4a9bc4"/>
<rect x="1051" y="393" width="319" height="248" fill="#fff"/>
<rect x="1051" y="393" width="305" height="23" fill="#d4d4d4"/>
<g clip-path="url(#c3)" fill="#ececec"><rect x="1051" y="440" width="305" height="1"/><rect x="1051" y="464" width="305" height="1"/><rect x="1051" y="488" width="305" height="1"/><rect x="1051" y="512" width="305" height="1"/><rect x="1051" y="536" width="305" height="1"/><rect x="1051" y="560" width="305" height="1"/><rect x="1051" y="584" width="305" height="1"/><rect x="1051" y="608" width="305" height="1"/><rect x="1051" y="632" width="305" height="1"/><rect x="1203" y="393" width="1" height="248"/></g>
<rect x="1203" y="393" width="1" height="23" fill="#e8e8e8"/><rect x="1051" y="416" width="305" height="1" fill="#ececec"/>
<rect x="1356" y="393" width="14" height="248" fill="#f2f2f2"/>
<rect x="1359.500" y="394.500" width="9" height="55" rx="4" fill="#e0e0e0" stroke="#ccc"/>
<g clip-path="url(#c2)">
<text x="1072" y="410" class="b" style="fill:#f4f4f4" textLength="71" lengthAdjust="spacingAndGlyphs">layout:width</text>
<text x="1072" y="434" class="b" style="fill:#1f3fa8" textLength="75" lengthAdjust="spacingAndGlyphs">layout:height</text>
<text x="1072" y="458" class="b" textLength="27" lengthAdjust="spacingAndGlyphs">style</text>
<text x="1072" y="482" textLength="121" lengthAdjust="spacingAndGlyphs">accessibilityLiveRegion</text>
<text x="1072" y="506" textLength="136" lengthAdjust="spacingAndGlyphs">accessibilityTraversalAfter</text>
<text x="1072" y="530" textLength="143" lengthAdjust="spacingAndGlyphs">accessibilityTraversalBefore</text>
<text x="1072" y="554" textLength="29" lengthAdjust="spacingAndGlyphs">alpha</text>
<text x="1072" y="578" class="b" textLength="69" lengthAdjust="spacingAndGlyphs">background</text>
<text x="1072" y="602" textLength="84" lengthAdjust="spacingAndGlyphs">backgroundTint</text>
<text x="1072" y="626" textLength="115" lengthAdjust="spacingAndGlyphs">backgroundTintMode</text>
</g>
<text x="1207" y="410" style="fill:#f4f4f4" textLength="73" lengthAdjust="spacingAndGlyphs">match_parent</text>
<text x="1207" y="434" textLength="73" lengthAdjust="spacingAndGlyphs">match_parent</text>
<rect x="1207.500" y="637.500" width="14" height="8" rx="2" fill="#fff" stroke="#666"/>

<!-- design/text tabs -->
<rect x="30" y="641" width="1340" height="4" fill="#fff"/>
<rect x="30" y="642" width="1340" height="1" fill="#bbb"/>
<rect x="30" y="645" width="1340" height="27" fill="#e8e8e8"/>
<rect x="30" y="645" width="1340" height="1" fill="#a8a8a8"/>
<rect x="40" y="645" width="51" height="27" fill="#fff"/>
<path d="M40.500 672V645.500H91" fill="none" stroke="#aaa"/>
<rect x="91.500" y="645.500" width="50" height="26" fill="#d0d0d0" stroke="#a8a8a8"/>
<text x="49" y="663" textLength="37" lengthAdjust="spacingAndGlyphs">Design</text>
<text x="107" y="663" style="fill:#333">Text</text>
<rect x="30" y="671" width="1340" height="1" fill="#a8a8a8"/>

<!-- run header -->
<rect x="30" y="672" width="1340" height="24" fill="#e8e8e8"/>
<rect x="30" y="695" width="1340" height="1" fill="#b0b0b0"/>
<text x="35" y="688" style="fill:#555">Run</text>
<path d="M59 677l11 7-11 7z" fill="#4db05a"/>
<text x="75" y="688" textLength="107" lengthAdjust="spacingAndGlyphs" style="fill:#555">AVD: Nexus_5_API_16</text>
<use href="#gear" transform="translate(1329,684)"/><path d="M1336 683h5l-2.500 3z" fill="#6e6e6e"/>
<path d="M1357 678v7M1354 682l3 3 3-3" stroke="#666" fill="none"/><rect x="1352" y="687" width="10" height="2" fill="#777"/>

<!-- console -->
<rect x="30" y="696" width="28" height="253" fill="#e8e8e8"/>
<rect x="58" y="696" width="6" height="253" fill="#f2f2f2"/>
<rect x="63" y="696" width="1" height="253" fill="#e2e2e2"/>
<rect x="64" y="696" width="1293" height="253" fill="#fff"/>
<rect x="1357" y="696" width="13" height="253" fill="#f2f2f2"/>
<path d="M44 703l6 6h-4v7h-4v-7h-4z" fill="#a8a8a8"/>
<path d="M44 741l6-6h-4v-7h-4v7h-4z" fill="#a8a8a8"/>
<path d="M37 756h8M47 756h4M37 760h3M43 760h8M37 764h7M47 764h4" stroke="#7a9cb8" stroke-width="1.500"/><path d="M49 754l3 2-3 2M39 762l-3 2 3 2" stroke="#4c87ac" fill="none"/>
<rect x="37.500" y="781.500" width="13" height="12" fill="#e8e8e8" stroke="#aaa" stroke-width="1.500"/><path d="M47 779v7h3l-4 4-4-4h3v-7z" fill="#8a8a8a"/>
<rect x="40" y="803" width="8" height="4" fill="#e8e8e8" stroke="#999"/><rect x="37.500" y="806.500" width="13" height="6" fill="#999"/><rect x="40.500" y="811.500" width="7" height="5" fill="#e8e8e8" stroke="#999"/>
<path d="M38 829.500h12M41.500 829v-2h5v2" stroke="#999" fill="none" stroke-width="1.500"/><rect x="39" y="831" width="10" height="10" rx="1" fill="#999"/><path d="M41.500 832.500v7M44 832.500v7M46.500 832.500v7" stroke="#e8e8e8"/>
<g class="m">
<text x="69" y="710" style="fill:#0d7a46;font-style:italic">C:₩Users₩user₩AppData₩Local₩Android₩sdk₩tools₩emulator.exe -netdelay none -netspeed full -avd Nexus_5_API_16</text>
<text x="69" y="729">emulator: device fd:616</text>
<text x="69" y="748" style="fill:#8b0000">HAXM is not working and emulator runs in emulation mode</text>
<text x="69" y="767">emulator: The memory needed by this AVD exceeds the max specified in your HAXM configuration.</text>
<text x="69" y="786">emulator: AVD      RAM size = 750 MB</text>
<text x="69" y="805">emulator: HAXM max RAM size = 512 MB</text>
<text x="69" y="824">emulator: You might want to adjust your AVD RAM size and/or HAXM configuration to run in fast virt mode.</text>
<text x="69" y="843">emulator: warning: opening audio output failed</text>
<text x="69" y="862">creating window 61 83 462 820</text>
<text x="69" y="881">emulator: UpdateCheck: current version '24.4.1', last version '24.4.1'</text>
</g>

<!-- bottom tool bar -->
<rect x="8" y="949" width="1384" height="1" fill="#9a9a9a"/>
<rect x="8" y="950" width="1384" height="21" fill="#e8e8e8"/>
<rect x="351" y="950" width="67" height="21" fill="#b4b4b4"/>
<rect x="8" y="971" width="1384" height="1" fill="#a0a0a0"/>
<rect x="39.500" y="956.500" width="11" height="10" fill="#ddd" stroke="#777"/><path d="M42 959l2 2-2 2" stroke="#555" fill="none"/>
<text x="56" y="966" textLength="43" lengthAdjust="spacingAndGlyphs">Terminal</text>
<use href="#droid" transform="translate(129,960) scale(.85)"/>
<text x="141" y="966" textLength="98" lengthAdjust="spacingAndGlyphs"><tspan class="u">6</tspan>: Android Monitor</text>
<rect x="263.500" y="955.500" width="11" height="11" fill="#f4d8a8" stroke="#c8903c"/><path d="M266 958.500h6M266 961h6M266 963.500h6" stroke="#a87028"/>
<text x="279" y="966" textLength="63" lengthAdjust="spacingAndGlyphs"><tspan class="u">0</tspan>: Messages</text>
<path d="M362 955l12 7.500-12 7.500z" fill="#39a84e"/><circle cx="372" cy="967" r="2" fill="#22cc44"/>
<text x="378" y="966" textLength="31" lengthAdjust="spacingAndGlyphs"><tspan class="u">4</tspan>: Run</text>
<circle cx="432" cy="957" r="3.500" fill="#fff" stroke="#666"/><circle cx="436" cy="961" r="3" fill="#e8b080"/><path d="M431 968c0-5 10-5 10 0z" fill="#5a8fbe"/>
<text x="446" y="966" textLength="32" lengthAdjust="spacingAndGlyphs">TODO</text>
<path d="M1173 955.500h12v8h-5l-1 4-2-4h-4z" fill="#b4b4b4"/>
<text x="1191" y="966" textLength="50" lengthAdjust="spacingAndGlyphs">Event Log</text>
<rect x="1264.500" y="955.500" width="12" height="12" fill="#eef4f8" stroke="#5a96c4"/><rect x="1264" y="955" width="13" height="2" fill="#5a96c4"/><path d="M1267 960h7M1267 962.500h7M1267 965h4" stroke="#5a7a94"/>
<text x="1282" y="966" textLength="79" lengthAdjust="spacingAndGlyphs">Gradle Console</text>

<!-- status bar -->
<rect x="8" y="972" width="1384" height="20" fill="#e6e6e6"/>
<rect x="13.500" y="975.500" width="14" height="12" fill="#cfcfcf" stroke="#777"/><rect x="13" y="988" width="15" height="1" fill="#777"/>
<text x="35" y="987" textLength="279" lengthAdjust="spacingAndGlyphs">Gradle build finished in 13s 54ms (20 minutes ago)</text>
<path d="M1119.500 973V992M1133.500 973V992M1165.500 973V992M1197.500 973V992M1342.500 973V992" stroke="#c4c4c4"/>
<text x="1140" y="987" style="fill:#9a9a9a">n/a</text><text x="1172" y="987" style="fill:#9a9a9a">n/a</text>
<text x="1201" y="987" textLength="122" lengthAdjust="spacingAndGlyphs" style="fill:#9a9a9a">Context: &lt;no context&gt;</text>
<path d="M1351 980v-2a2.500 2.500 0 0 1 5 0" fill="none" stroke="#777" stroke-width="1.300"/><rect x="1353" y="981" width="6" height="5" fill="#777"/>
<circle cx="1377" cy="979" r="4" fill="#c0c0c0"/><rect x="1371" y="980" width="12" height="2" fill="#c0c0c0"/><path d="M1372 988c0-5 10-5 10 0z" fill="#c0c0c0"/>
</svg>
</body></html>
